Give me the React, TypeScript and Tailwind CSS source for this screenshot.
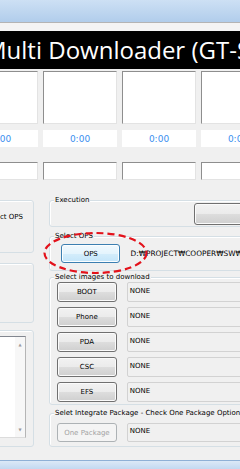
import React from 'react';

const btn =
  'flex items-center justify-center rounded-[3px] border border-[#707070] bg-[linear-gradient(#f2f2f2_0%,#ebebeb_50%,#dddddd_51%,#cfcfcf_100%)] shadow-[inset_0_0_0_1px_#fbfbfb] text-[7px] leading-[10px] text-black';

const sunken = 'bg-white border border-t-[#8e8e8e] border-l-[#8e8e8e] border-r-[#e3e3e3] border-b-[#e3e3e3]';

const Group: React.FC<{ label?: string; className?: string; children?: React.ReactNode }> = ({ label, className, children }) => (
  <div className={`relative rounded-[3px] border border-[#d5dfe5] shadow-[inset_1px_1px_0_#ffffff] ${className ?? ''}`}>
    {label && (
      <span className="absolute left-[4px] top-[-6px] whitespace-nowrap bg-[#f0f0f0] px-[1px] text-[7px] leading-[10px] text-black">
        {label}
      </span>
    )}
    {children}
  </div>
);

const images = ['BOOT', 'Phone', 'PDA', 'CSC', 'EFS'];

export default function App() {
  return (
    <div className="relative flex h-[469px] w-[240px] flex-col overflow-hidden bg-[#f0f0f0] font-['DejaVu_Sans',sans-serif]">
      {/* window caption */}
      <div className="h-[22px] shrink-0 bg-gradient-to-b from-[#cde0f4] to-[#b1cdeb]" />
      <div className="h-[9px] shrink-0 border-t border-[#b4b4b4] bg-[#f4f4f4]" />

      {/* banner */}
      <div className="flex h-[38px] shrink-0 items-center overflow-hidden bg-black">
        <span className="ml-[-15px] whitespace-nowrap font-['Open_Sans',sans-serif] text-[24px] leading-[30px] text-white">
          Multi Downloader (GT-S5830)
        </span>
      </div>

      {/* port columns */}
      <div className="ml-[-36px] mt-[2px] flex shrink-0 gap-[5px]">
        {[0, 1, 2, 3].map(i => (
          <div key={i} className="flex w-[74px] shrink-0 flex-col">
            <div className={`h-[53px] ${sunken}`} />
            <div className="mt-[6px] flex h-[17px] items-center justify-center bg-white text-[9px] leading-[10px] text-[#3b8fef]">
              0:00
            </div>
            <div className={`mt-[15px] h-[18px] ${sunken}`} />
          </div>
        ))}
      </div>

      {/* main area */}
      <div className="mt-[20px] flex shrink-0">
        {/* left column */}
        <div className="ml-[-66px] flex w-[100px] shrink-0 flex-col">
          <Group className="h-[53px]">
            <div className="flex justify-end pr-[10px] pt-[11px] text-[7px] leading-[10px] text-black">Select OPS</div>
          </Group>
          <Group className="mt-[10px] h-[60px]" />
          <Group className="mt-[7px] h-[117px]">
            <div className="mr-[7px] mt-[5px] flex h-[102px] border border-t-[#828790] border-l-[#828790] border-r-[#b5b5b5] border-b-[#dcdcdc] bg-white">
              <div className="flex-1" />
              <div className="flex w-[10px] flex-col items-center justify-between bg-[#f7f7f7] py-[5px] text-[4px] leading-[5px] text-[#9a9a9a]">
                <span>▲</span>
                <span>▼</span>
              </div>
            </div>
          </Group>
        </div>

        {/* right column */}
        <div className="ml-[15px] flex w-[260px] shrink-0 flex-col">
          <Group label="Execution" className="h-[27px]">
            <div className={`ml-[144px] mt-[2px] h-[22px] w-[90px] ${btn}`} />
          </Group>

          <Group label="Select OPS" className="mt-[9px] h-[35px]">
            <div className="flex items-center pl-[11px] pt-[7px]">
              <div className="flex h-[19px] w-[65px] items-center justify-center rounded-[3px] border border-[#3c7fb1] bg-[linear-gradient(#f1f9fe_0%,#e4f4fd_50%,#d4edfb_51%,#c3e5fa_100%)] shadow-[inset_0_0_0_1px_#fcfeff] text-[7px] leading-[10px] text-black">
                OPS
              </div>
              <span className="ml-[10px] whitespace-nowrap text-[7.4px] leading-[10px] text-black">
                D:₩PROJECT₩COOPER₩SW₩COOPER_OPS.ops
              </span>
            </div>
          </Group>

          <Group label="Select images to download" className="mt-[6px] h-[128px]">
            <div className="flex flex-col gap-[5px] pl-[7px] pt-[4px]">
              {images.map(name => (
                <div key={name} className="flex">
                  <div className={`h-[20px] w-[66px] ${btn}`}>{name}</div>
                  <div className="ml-[10px] h-[20px] w-[200px] rounded-[2px] border border-[#d2d2d2] pl-[2px] pt-[3px] text-[7px] leading-[10px] text-black">
                    NONE
                  </div>
                </div>
              ))}
            </div>
          </Group>

          <Group label="Selet Integrate Package - Check One Package Option" className="mt-[8px] h-[34px]">
            <div className="flex pl-[7px] pt-[9px]">
              <div className="flex h-[19px] w-[66px] items-center justify-center rounded-[3px] border border-[#adb2b5] bg-[#f4f4f4] text-[7px] leading-[10px] text-[#a3a3a3]">
                One Package
              </div>
              <div className="ml-[10px] h-[19px] w-[200px] rounded-[2px] border border-[#d2d2d2] pl-[2px] pt-[2px] text-[7px] leading-[10px] text-black">
                NONE
              </div>
            </div>
          </Group>
        </div>
      </div>

      {/* bottom frame */}
      <div className="mt-auto h-[9px] shrink-0 border-t border-[#8fb0d6] bg-gradient-to-b from-[#dce9f7] to-[#c3d9f1]" />

      {/* red dashed highlight around OPS */}
      <svg className="pointer-events-none absolute left-[43px] top-[231px] h-[44px] w-[105px]" viewBox="0 0 105 44">
        <ellipse cx="52.5" cy="22" rx="51" ry="20" fill="none" stroke="#e3121b" strokeWidth="2.2" strokeDasharray="7 4" />
      </svg>
    </div>
  );
}
